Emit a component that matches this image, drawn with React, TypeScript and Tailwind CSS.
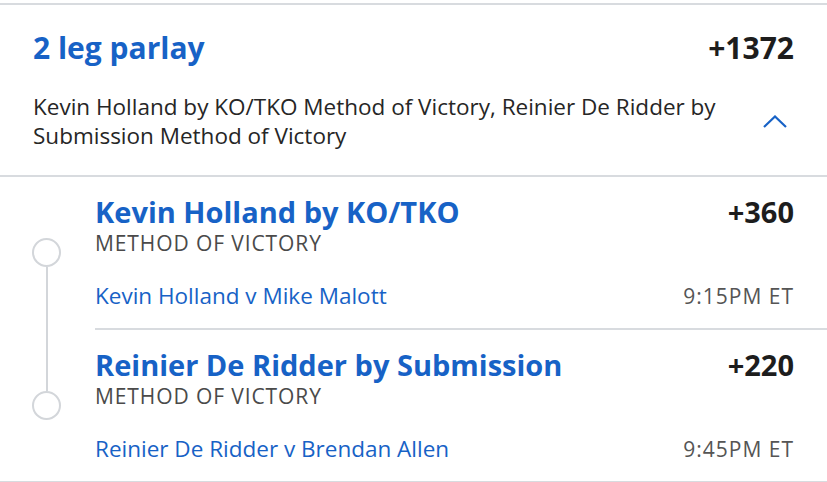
type Leg = {
  title: string;
  odds: string;
  market: string;
  event: string;
  time: string;
};

const legs: Leg[] = [
  {
    title: "Kevin Holland by KO/TKO",
    odds: "+360",
    market: "Method of Victory",
    event: "Kevin Holland v Mike Malott",
    time: "9:15PM ET",
  },
  {
    title: "Reinier De Ridder by Submission",
    odds: "+220",
    market: "Method of Victory",
    event: "Reinier De Ridder v Brendan Allen",
    time: "9:45PM ET",
  },
];

function LegRow({ leg, first }: { leg: Leg; first: boolean }) {
  return (
    <div className="flex">
      {/* timeline column */}
      <div className="w-[95px] flex flex-col items-center pr-[2px]">
        {first ? (
          <div className="h-[61px]" />
        ) : (
          <div className="h-[61px] w-[2px] bg-[#d3d6da]" />
        )}
        <div className="w-[29px] h-[29px] rounded-full border-2 border-[#d3d6da] bg-white shrink-0" />
        {first && <div className="flex-1 w-[2px] bg-[#d3d6da]" />}
      </div>
      <div className={`flex-1 ${first ? "border-b-2 border-[#d8dbdf]" : ""}`}>
        <div className="pr-[33px] pt-[18px] pb-[19px]">
          <div className="flex justify-between items-baseline">
            <div className="text-[29px] leading-[34px] font-bold text-[#1762c6]">{leg.title}</div>
            <div className="text-[29px] leading-[34px] font-bold text-[#1d1d1d]">{leg.odds}</div>
          </div>
          <div className="mt-[2px] text-[21px] leading-[24px] uppercase tracking-[0.9px] text-[#4a4a4a]">
            {leg.market}
          </div>
          <div className="flex justify-between items-baseline mt-[28px]">
            <div className="text-[22.5px] leading-[26px] text-[#1762c6]">{leg.event}</div>
            <div className="text-[21px] leading-[26px] tracking-[1px] text-[#555]">{leg.time}</div>
          </div>
        </div>
      </div>
    </div>
  );
}

export default function App() {
  return (
    <div className="w-[827px] h-[482px] bg-white overflow-hidden font-['Open_Sans',sans-serif]">
      <div className="mt-[3px] border-t-2 border-[#d8dbdf]" />
      <div className="px-[33px] pt-[25px] pb-[25px] border-b-2 border-[#d8dbdf]">
        <div className="flex justify-between items-baseline">
          <div className="text-[30px] leading-[36px] font-bold text-[#1762c6]">2 leg parlay</div>
          <div className="text-[30px] leading-[36px] font-bold text-[#1d1d1d]">+1372</div>
        </div>
        <div className="flex items-center justify-between mt-[26px]">
          <div className="text-[22.5px] leading-[29px] text-[#262626] max-w-[710px]">
            Kevin Holland by KO/TKO Method of Victory, Reinier De Ridder by Submission Method of Victory
          </div>
          <svg width="24" height="13" viewBox="0 0 24 13" className="mr-[7px] shrink-0">
            <polyline points="1,12 12,1.5 23,12" fill="none" stroke="#1762c6" strokeWidth="2.2" />
          </svg>
        </div>
      </div>
      <div>
        {legs.map((leg, i) => (
          <LegRow key={leg.title} leg={leg} first={i === 0} />
        ))}
      </div>
      <div className="border-t-2 border-[#d8dbdf]" />
    </div>
  );
}
